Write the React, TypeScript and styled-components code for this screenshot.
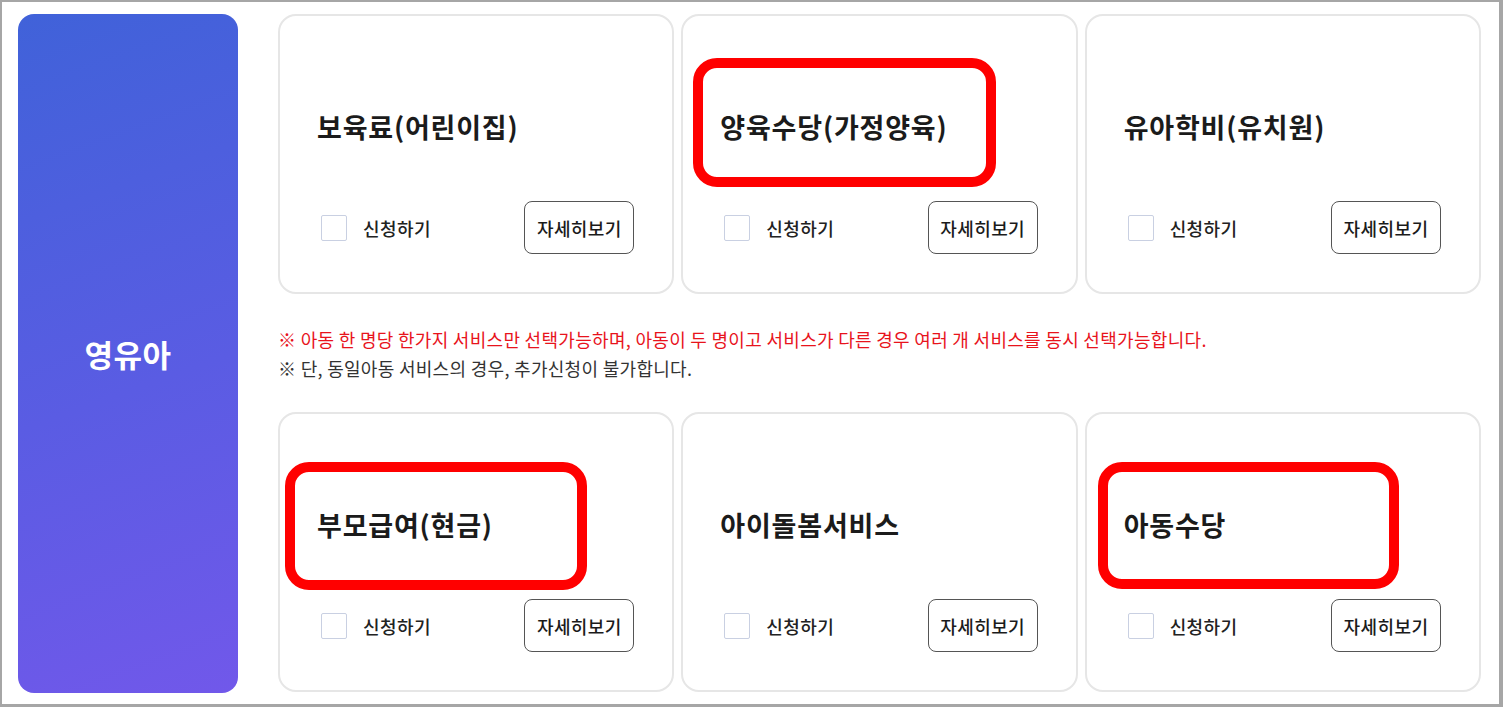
import React from "react";
import styled, { createGlobalStyle } from "styled-components";

const Global = createGlobalStyle`
  html, body { margin: 0; padding: 0; background: #fff; }
  body { font-family: "Noto Sans CJK KR", "Noto Sans", sans-serif; }
  * { box-sizing: border-box; }
`;

const Frame = styled.div`
  width: 1503px;
  height: 707px;
  border: 2px solid #a6a6a6;
  border-right-width: 4px;
  border-bottom-width: 3px;
  padding: 12px 18px 11px 16px;
  display: flex;
  gap: 40px;
  background: #fff;
`;

const Sidebar = styled.div`
  width: 220px;
  flex: none;
  border-radius: 16px;
  background: linear-gradient(160deg, #4062d9 0%, #5a5ce3 55%, #7158ea 100%);
  display: flex;
  align-items: center;
  justify-content: center;
  color: #fff;
  font-size: 31px;
  font-weight: 700;
  letter-spacing: 0.5px;
`;

const Main = styled.div`
  flex: 1;
  display: flex;
  flex-direction: column;
`;

const Grid = styled.div`
  display: grid;
  grid-template-columns: repeat(3, 1fr);
  gap: 7px;
  height: 280px;
`;

const Card = styled.div`
  position: relative;
  border: 2px solid #e6e6e6;
  border-radius: 18px;
  display: flex;
  flex-direction: column;
  padding: 93px 38px 0 37px;
`;

const Title = styled.div`
  font-size: 27px;
  font-weight: 700;
  color: #1b1b1b;
  line-height: 36px;
  letter-spacing: 0.8px;
`;

const Actions = styled.div`
  margin-top: 56px;
  display: flex;
  align-items: center;
  justify-content: space-between;
  padding-left: 4px;
`;

const Apply = styled.label`
  display: flex;
  align-items: center;
  gap: 16px;
  font-size: 18px;
  font-weight: 500;
  letter-spacing: 0.4px;
  color: #222;
  cursor: pointer;
`;

const Box = styled.span`
  width: 26px;
  height: 26px;
  border: 1.5px solid #c9d0e2;
  border-radius: 2px;
  background: #fff;
`;

const Detail = styled.button`
  width: 110px;
  height: 53px;
  border: 1.5px solid #555;
  border-radius: 8px;
  background: #fff;
  font-family: inherit;
  font-size: 18px;
  font-weight: 500;
  color: #1b1b1b;
  padding: 0;
  letter-spacing: 0.4px;
`;

const Notice = styled.div`
  height: 118px;
  padding-top: 31px;
  font-size: 18px;
  line-height: 29px;
  letter-spacing: 0.3px;
`;

const NoticeLine = styled.div<{ $red?: boolean }>`
  color: ${(p) => (p.$red ? "#e8131c" : "#333")};
  white-space: nowrap;
`;

const Highlight = styled.div`
  position: absolute;
  border: 10px solid #ff0000;
  border-radius: 24px;
  pointer-events: none;
`;

type Item = { title: string; mark?: { l: number; t: number; w: number; h: number } };

const row1: Item[] = [
  { title: "보육료(어린이집)" },
  { title: "양육수당(가정양육)", mark: { l: 10, t: 42, w: 303, h: 129 } },
  { title: "유아학비(유치원)" },
];
const row2: Item[] = [
  { title: "부모급여(현금)", mark: { l: 5, t: 48, w: 302, h: 128 } },
  { title: "아이돌봄서비스" },
  { title: "아동수당", mark: { l: 11, t: 48, w: 301, h: 127 } },
];

function ServiceCard({ item }: { item: Item }) {
  return (
    <Card>
      <Title>{item.title}</Title>
      <Actions>
        <Apply>
          <Box />
          신청하기
        </Apply>
        <Detail>자세히보기</Detail>
      </Actions>
      {item.mark && (
        <Highlight
          style={{
            left: item.mark.l,
            top: item.mark.t,
            width: item.mark.w,
            height: item.mark.h,
          }}
        />
      )}
    </Card>
  );
}

export default function App() {
  return (
    <>
      <Global />
      <Frame>
        <Sidebar>영유아</Sidebar>
        <Main>
          <Grid>
            {row1.map((it) => (
              <ServiceCard key={it.title} item={it} />
            ))}
          </Grid>
          <Notice>
            <NoticeLine $red>
              ※ 아동 한 명당 한가지 서비스만 선택가능하며, 아동이 두 명이고 서비스가 다른 경우 여러 개 서비스를 동시 선택가능합니다.
            </NoticeLine>
            <NoticeLine>※ 단, 동일아동 서비스의 경우, 추가신청이 불가합니다.</NoticeLine>
          </Notice>
          <Grid>
            {row2.map((it) => (
              <ServiceCard key={it.title} item={it} />
            ))}
          </Grid>
        </Main>
      </Frame>
    </>
  );
}
